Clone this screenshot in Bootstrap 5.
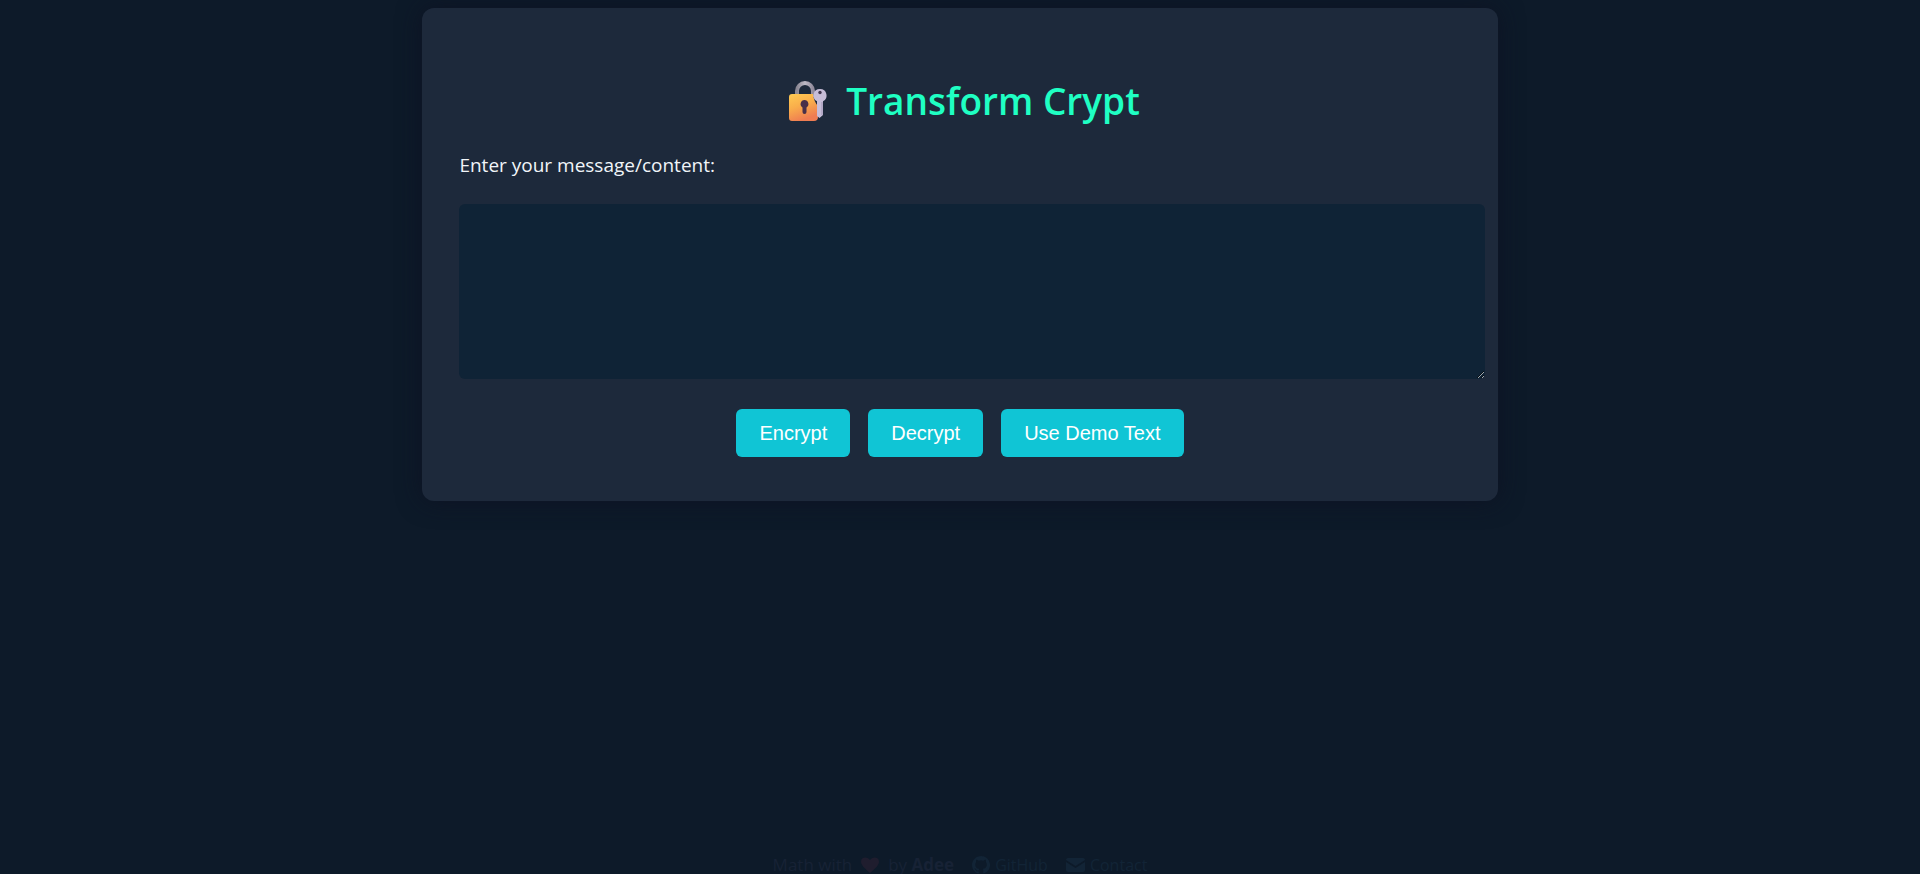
<!DOCTYPE html>
<html lang="en">
<head>
<meta charset="utf-8">
<meta name="viewport" content="width=device-width, initial-scale=1">
<title>Transform Crypt</title>
<link href="https://cdn.jsdelivr.net/npm/bootstrap@5.3.0/dist/css/bootstrap.min.css" rel="stylesheet">
<style>
body { background: #0d1a29; color: #f1f5f9; font-family: "Segoe UI", "Open Sans", "Noto Sans", sans-serif; font-size: 19px; line-height: 26px; }
.crypt-panel { width: 56%; min-width: 320px; padding: 68px 37px 44px; background: #1d293b; border-radius: 12px; box-shadow: 0 0 24px rgba(14, 16, 34, .8); }
.crypt-title { font-size: 37px; line-height: 50px; font-weight: 600; color: #1fffc3; gap: 18px; margin-bottom: 26px; }
.crypt-label { margin-bottom: 26px; }
.crypt-input, .crypt-input:focus { width: calc(100% + 24px); height: 175px; background: #0f2336; color: #f1f5f9; border: 0; border-radius: 6px; box-shadow: none; resize: vertical; }
.crypt-actions { gap: 18px; margin-top: 30px; }
.crypt-btn { background: #10c5d5; color: #fff; border: 0; border-radius: 6px; font-family: "Liberation Sans", Arial, sans-serif; font-size: 20px; line-height: 24px; padding: 12px 23px; }
.crypt-btn:hover { background: #0eaebc; color: #fff; }
.crypt-footer { color: #172235; font-size: 17px; line-height: 18px; gap: 18px; }
.crypt-footer a { color: #122436; font-size: 16px; gap: 5px; }
</style>
</head>
<body class="d-flex flex-column min-vh-100">
<main class="crypt-panel mx-auto mt-2">
  <h1 class="crypt-title d-flex justify-content-center align-items-center">
    <svg width="48" height="42" viewBox="-8 0 48 42" aria-hidden="true">
      <defs>
        <linearGradient id="body" x1="0" y1="0" x2=".4" y2="1"><stop offset="0" stop-color="#ffcb52"/><stop offset=".5" stop-color="#f9ad4b"/><stop offset="1" stop-color="#ef7c52"/></linearGradient>
        <linearGradient id="steel" x1="0" y1="0" x2="1" y2="0"><stop offset="0" stop-color="#8b8793"/><stop offset=".5" stop-color="#bdb9c5"/><stop offset="1" stop-color="#918a9b"/></linearGradient>
      </defs>
      <path d="M9 17V11a8 8 0 0 1 16 0v6" fill="none" stroke="url(#steel)" stroke-width="4"/>
      <path d="M4 14H25Q26 22 30 26V37Q30 41 26 41H4Q1 41 1 38V17Q1 14 4 14Z" fill="url(#body)"/>
      <path d="M16.500 20a4 4 0 0 1 2 7.400V32a2 2 0 0 1-4 0V27.400a4 4 0 0 1 2-7.400Z" fill="#493049"/>
      <path d="M32 9a6.500 6.500 0 0 1 3 12.300V35L31.500 38 29 36V21.300A6.500 6.500 0 0 1 32 9Z" fill="#c7bdd8"/>
      <path d="M34 22V35" stroke="#9f94b5" stroke-width="1"/>
      <circle cx="32" cy="12.500" r="1.700" fill="#42364f"/>
    </svg>
    <span>Transform Crypt</span>
  </h1>
  <form onsubmit="return false">
    <label class="crypt-label d-block" for="message">Enter your message/content:</label>
    <textarea class="crypt-input form-control" id="message"></textarea>
    <div class="crypt-actions d-flex flex-wrap justify-content-center">
      <button type="button" class="btn crypt-btn">Encrypt</button>
      <button type="button" class="btn crypt-btn">Decrypt</button>
      <button type="button" class="btn crypt-btn">Use Demo Text</button>
    </div>
  </form>
</main>
<footer class="crypt-footer mt-auto d-flex justify-content-center align-items-center">
  <span class="d-flex align-items-center gap-2">Math with
    <svg width="20" height="18" viewBox="0 0 20 18" aria-hidden="true"><path d="M10 17C4 12 1 9 1 5.500 1 1 7 0 10 4c3-4 9-3 9 1.500C19 9 16 12 10 17Z" fill="#1f1d2e"/></svg>
    <span>by <strong>Adee</strong></span></span>
  <a class="d-flex align-items-center text-decoration-none" href="#"><svg width="18" height="18" viewBox="0 0 16 16" fill="currentColor" aria-hidden="true"><path d="M8 0C3.580 0 0 3.580 0 8c0 3.540 2.290 6.530 5.470 7.590.4.070.55-.17.55-.38v-1.490c-2.010.37-2.530-.49-2.690-.94-.09-.23-.48-.94-.82-1.130-.28-.15-.68-.52-.01-.53.63-.01 1.080.58 1.230.82.72 1.210 1.870.87 2.330.66.07-.52.28-.87.51-1.070-1.780-.2-3.640-.89-3.640-3.950 0-.87.31-1.590.82-2.150-.08-.2-.36-1.020.08-2.120 0 0 .67-.21 2.200.82a7.600 7.600 0 0 1 4 0c1.530-1.040 2.200-.82 2.200-.82.44 1.100.16 1.920.08 2.120.51.56.82 1.270.82 2.150 0 3.070-1.870 3.750-3.650 3.950.29.25.54.73.54 1.480v2.200c0 .21.15.46.55.38A8 8 0 0 0 8 0Z"/></svg>GitHub</a>
  <a class="d-flex align-items-center text-decoration-none" href="#"><svg width="19" height="14" viewBox="0 0 19 14" fill="currentColor" aria-hidden="true"><path d="M2 0H17Q19 0 19 2L9.500 8 0 2Q0 0 2 0ZM0 4 9.500 10 19 4V12Q19 14 17 14H2Q0 14 0 12Z"/></svg>Contact</a>
</footer>
<script src="https://cdn.jsdelivr.net/npm/bootstrap@5.3.0/dist/js/bootstrap.bundle.min.js"></script>
</body>
</html>
